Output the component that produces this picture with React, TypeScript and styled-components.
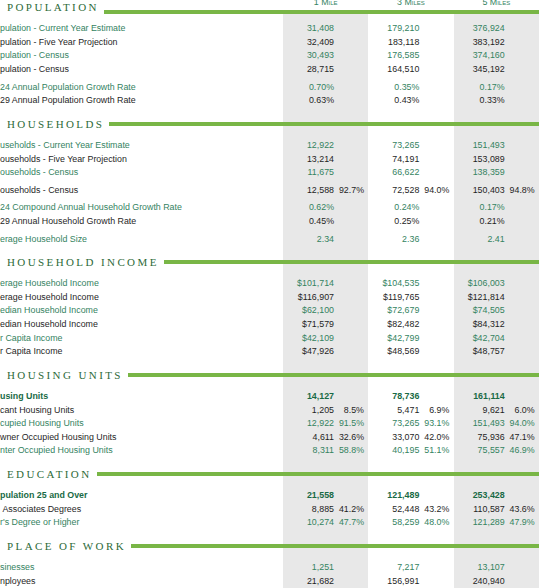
import React from 'react'
import styled, { createGlobalStyle } from 'styled-components'

type Tone = 'green' | 'dark' | 'bold'

interface Line {
	label: string
	tone: Tone
	values: string[]
	gap?: boolean
}

interface Section {
	title: string
	rows: Line[]
}

const COLUMNS = ['1 Mile', '3 Miles', '5 Miles']

const SECTIONS: Section[] = [
	{
		title: 'Population',
		rows: [
			{ label: 'pulation - Current Year Estimate', tone: 'green', values: ['31,408', '179,210', '376,924'] },
			{ label: 'pulation - Five Year Projection', tone: 'dark', values: ['32,409', '183,118', '383,192'] },
			{ label: 'pulation - Census', tone: 'green', values: ['30,493', '176,585', '374,160'] },
			{ label: 'pulation - Census', tone: 'dark', values: ['28,715', '164,510', '345,192'] },
			{ label: '24 Annual Population Growth Rate', tone: 'green', values: ['0.70%', '0.35%', '0.17%'], gap: true },
			{ label: '29 Annual Population Growth Rate', tone: 'dark', values: ['0.63%', '0.43%', '0.33%'] },
		],
	},
	{
		title: 'Households',
		rows: [
			{ label: 'useholds - Current Year Estimate', tone: 'green', values: ['12,922', '73,265', '151,493'] },
			{ label: 'ouseholds - Five Year Projection', tone: 'dark', values: ['13,214', '74,191', '153,089'] },
			{ label: 'ouseholds - Census', tone: 'green', values: ['11,675', '66,622', '138,359'] },
			{ label: 'ouseholds - Census', tone: 'dark', values: ['12,588 92.7%', '72,528 94.0%', '150,403 94.8%'], gap: true },
			{ label: '24 Compound Annual Household Growth Rate', tone: 'green', values: ['0.62%', '0.24%', '0.17%'], gap: true },
			{ label: '29 Annual Household Growth Rate', tone: 'dark', values: ['0.45%', '0.25%', '0.21%'] },
			{ label: 'erage Household Size', tone: 'green', values: ['2.34', '2.36', '2.41'], gap: true },
		],
	},
	{
		title: 'Household Income',
		rows: [
			{ label: 'erage Household Income', tone: 'green', values: ['$101,714', '$104,535', '$106,003'] },
			{ label: 'erage Household Income', tone: 'dark', values: ['$116,907', '$119,765', '$121,814'] },
			{ label: 'edian Household Income', tone: 'green', values: ['$62,100', '$72,679', '$74,505'] },
			{ label: 'edian Household Income', tone: 'dark', values: ['$71,579', '$82,482', '$84,312'] },
			{ label: 'r Capita Income', tone: 'green', values: ['$42,109', '$42,799', '$42,704'] },
			{ label: 'r Capita Income', tone: 'dark', values: ['$47,926', '$48,569', '$48,757'] },
		],
	},
	{
		title: 'Housing Units',
		rows: [
			{ label: 'using Units', tone: 'bold', values: ['14,127', '78,736', '161,114'] },
			{ label: 'cant Housing Units', tone: 'dark', values: ['1,205 8.5%', '5,471 6.9%', '9,621 6.0%'] },
			{ label: 'cupied Housing Units', tone: 'green', values: ['12,922 91.5%', '73,265 93.1%', '151,493 94.0%'] },
			{ label: 'wner Occupied Housing Units', tone: 'dark', values: ['4,611 32.6%', '33,070 42.0%', '75,936 47.1%'] },
			{ label: 'nter Occupied Housing Units', tone: 'green', values: ['8,311 58.8%', '40,195 51.1%', '75,557 46.9%'] },
		],
	},
	{
		title: 'Education',
		rows: [
			{ label: 'pulation 25 and Over', tone: 'bold', values: ['21,558', '121,489', '253,428'] },
			{ label: '\u00a0Associates Degrees', tone: 'dark', values: ['8,885 41.2%', '52,448 43.2%', '110,587 43.6%'] },
			{ label: "r's Degree or Higher", tone: 'green', values: ['10,274 47.7%', '58,259 48.0%', '121,289 47.9%'] },
		],
	},
	{
		title: 'Place of Work',
		rows: [
			{ label: 'sinesses', tone: 'green', values: ['1,251', '7,217', '13,107'] },
			{ label: 'nployees', tone: 'dark', values: ['21,682', '156,991', '240,940'] },
		],
	},
]

const GREEN = '#34835f'
const DARK = '#1f1f1f'
const BOLD_GREEN = '#186a45'
const RULE = '#79b646'
const SHADE = '#e8e8e8'

const GlobalStyle = createGlobalStyle`
	html, body {
		margin: 0;
		padding: 0;
		background: #ffffff;
	}
	body {
		width: 539px;
		height: 588px;
		overflow: hidden;
		font-family: "Liberation Sans", Arial, sans-serif;
	}
`

// the alternating grey bands behind the 1 mile and 5 mile columns
const Sheet = styled.div`
	width: 539px;
	background: linear-gradient(
		to right,
		#ffffff 0 283px,
		${SHADE} 283px 368.33px,
		#ffffff 368.33px 453.67px,
		${SHADE} 453.67px 539px
	);
`

const Heading = styled.div<{ $top?: boolean }>`
	display: grid;
	grid-template-columns: 283px repeat(3, 1fr);
	height: ${({ $top }) => ($top ? 13 : 14)}px;
	background: ${({ $top }) => ($top ? '#ffffff' : 'transparent')};
`

const HeadingLabel = styled.div<{ $top?: boolean }>`
	display: flex;
	align-items: ${({ $top }) => ($top ? 'flex-end' : 'center')};
	padding-left: 7px;
	min-width: 0;
`

const Title = styled.h2`
	margin: 0 5px 0 0;
	align-self: center;
	font-family: "Liberation Serif", "Times New Roman", serif;
	font-size: 11px;
	font-weight: normal;
	line-height: 14px;
	letter-spacing: 2.4px;
	text-transform: uppercase;
	color: #2d6a38;
	white-space: nowrap;
`

const Rule = styled.div`
	flex: 1;
	height: 4px;
	background: ${RULE};
`

const HeadingCell = styled.div<{ $top?: boolean }>`
	display: flex;
	flex-direction: column;
	justify-content: ${({ $top }) => ($top ? 'space-between' : 'center')};
	& > ${Rule} {
		flex: none;
	}
`

const ColumnLabel = styled.div`
	margin-top: -2.5px;
	font-size: 8.85px;
	line-height: 8px;
	font-variant: small-caps;
	text-align: center;
	color: ${GREEN};
`

const Body = styled.div<{ $top?: boolean }>`
	padding: ${({ $top }) => ($top ? 9.2 : 7.9)}px 0 9.3px;
`

const Row = styled.div<{ $tone: Tone; $gap?: boolean }>`
	display: grid;
	grid-template-columns: 283px repeat(3, 1fr);
	height: 13.6px;
	margin-top: ${({ $gap }) => ($gap ? 4 : 0)}px;
	font-size: 8.85px;
	line-height: 13.6px;
	font-weight: ${({ $tone }) => ($tone === 'bold' ? 'bold' : 'normal')};
	color: ${({ $tone }) => ($tone === 'green' ? GREEN : $tone === 'bold' ? BOLD_GREEN : DARK)};
`

const Label = styled.div`
	white-space: nowrap;
	overflow: hidden;
`

const Value = styled.div`
	display: flex;
`

const Num = styled.span`
	width: 51px;
	text-align: right;
	white-space: nowrap;
`

const Pct = styled.span`
	width: 30px;
	text-align: right;
	white-space: nowrap;
`

function SectionBlock({ section, top }: { section: Section; top: boolean }) {
	return (
		<>
			<Heading $top={top}>
				<HeadingLabel $top={top}>
					<Title>{section.title}</Title>
					<Rule />
				</HeadingLabel>
				{COLUMNS.map((col) => (
					<HeadingCell key={col} $top={top}>
						{top && <ColumnLabel>{col}</ColumnLabel>}
						<Rule />
					</HeadingCell>
				))}
			</Heading>
			<Body $top={top}>
				{section.rows.map((row, i) => (
					<Row key={i} $tone={row.tone} $gap={row.gap}>
						<Label>{row.label}</Label>
						{row.values.map((v, j) => {
							const [num, pct] = v.split(' ')
							return (
								<Value key={j}>
									<Num>{num}</Num>
									{pct && <Pct>{pct}</Pct>}
								</Value>
							)
						})}
					</Row>
				))}
			</Body>
		</>
	)
}

export default function App() {
	return (
		<>
			<GlobalStyle />
			<Sheet>
				{SECTIONS.map((s, i) => (
					<SectionBlock key={s.title} section={s} top={i === 0} />
				))}
			</Sheet>
		</>
	)
}
